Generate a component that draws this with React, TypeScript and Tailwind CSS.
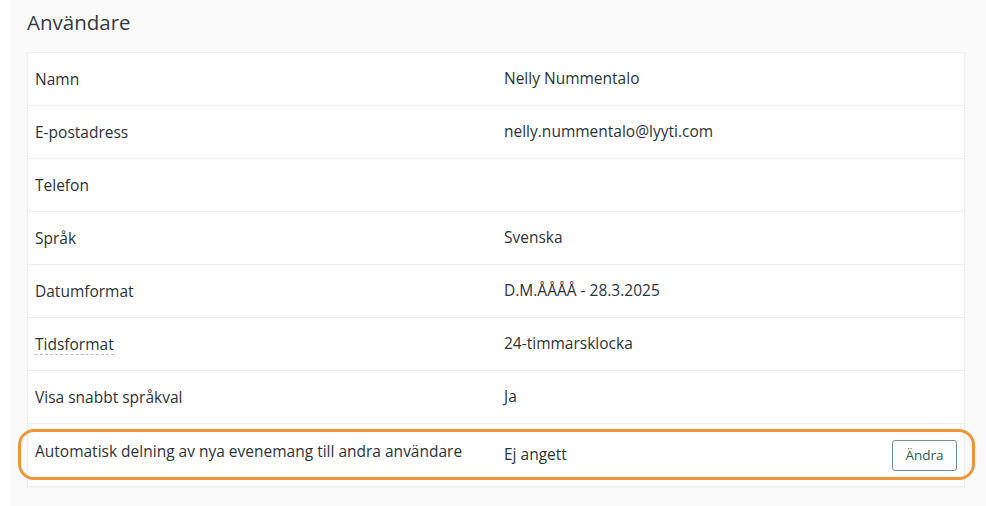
import React from "react";

const rows = [
  { label: "Namn", value: "Nelly Nummentalo" },
  { label: "E-postadress", value: "nelly.nummentalo@lyyti.com" },
  { label: "Telefon", value: "" },
  { label: "Språk", value: "Svenska" },
  { label: "Datumformat", value: "D.M.ÅÅÅÅ - 28.3.2025" },
  { label: "Tidsformat", value: "24-timmarsklocka", hint: true },
  { label: "Visa snabbt språkval", value: "Ja" },
];

const App: React.FC = () => {
  return (
    <div className="min-h-[506px] w-full bg-white pl-[10px] font-['Open_Sans',sans-serif] text-[#2d3339]">
      <div className="min-h-[506px] bg-[#fafafa] pl-[17px] pr-[21px] pt-[9px]">
        {/* Heading */}
        <h2 className="text-[20.5px] leading-[26px] text-[#333a40]">Användare</h2>

        {/* Table */}
        <div className="mt-[17px] border border-[#ededed] bg-white text-[15.5px]">
          {rows.map((row) => (
            <div key={row.label} className="flex h-[53px] border-b border-[#ededed]">
              <div className="flex w-1/2 items-center pl-[7px] pr-2">
                <span
                  className={
                    row.hint ? "border-b border-dashed border-[#b8bdc2] leading-[20px]" : "leading-[22px]"
                  }
                >
                  {row.label}
                </span>
              </div>
              <div className="flex w-1/2 items-center px-2">{row.value}</div>
            </div>
          ))}

          {/* Highlighted row */}
          <div className="relative flex h-[62px]">
            <div className="w-1/2 pl-[7px] pr-2 pt-[16px] leading-[22px]">
              Automatisk delning av nya evenemang till andra användare
            </div>
            <div className="flex w-1/2 items-center justify-between px-2">
              <span>Ej angett</span>
              <button className="mr-[-1px] h-[31px] w-[65px] rounded-[3px] border border-[#6f9590] bg-white text-[13.5px] text-[#2f5b55]">
                Ändra
              </button>
            </div>
            <div className="pointer-events-none absolute -left-[10px] -right-[11px] top-[5px] bottom-[6px] rounded-[16px] border-[3px] border-[#f0963a]" />
          </div>
        </div>
      </div>
    </div>
  );
};

export default App;
